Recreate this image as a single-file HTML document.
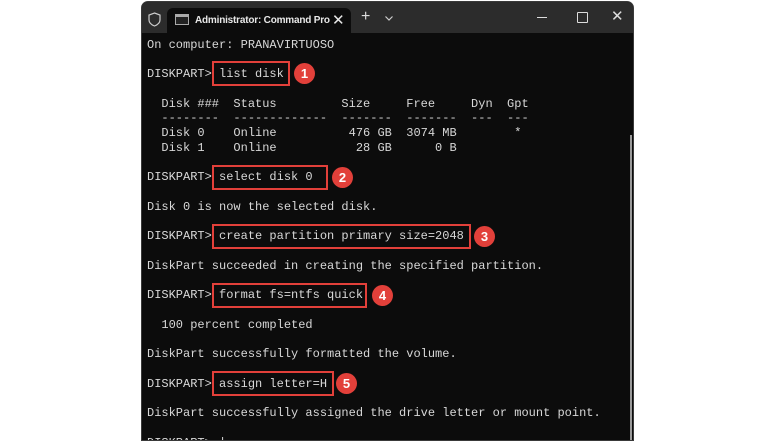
<!DOCTYPE html>
<html><head><style>
body{margin:0;width:780px;height:438px;background:#fff;overflow:hidden;position:relative;font-family:"Liberation Mono",monospace}
.win{position:absolute;left:141px;top:1px;width:493px;height:440px;background:#0c0c0c;border-radius:7px 7px 0 0;overflow:hidden;border:1px solid #3a3a3a;box-sizing:border-box}
.tb{position:absolute;left:0;top:0;width:100%;height:31px;background:#2c2c2c}
.tab{position:absolute;left:25px;top:6px;width:184px;height:25px;background:#0c0c0c;border-radius:6px 6px 0 0;color:#e8e8e8;font:bold 10px "Liberation Sans",sans-serif}
.t{position:absolute;left:5px;top:35.5px;color:#d8d8d8;font-size:12px;line-height:14.75px;white-space:pre}
.box{position:absolute;border:2px solid #e2403a;box-sizing:border-box;height:25px}
.c{position:absolute;width:21px;height:21px;border-radius:50%;background:#e2403a;color:#fff;font:bold 13px/21px "Liberation Sans",sans-serif;text-align:center}
.ic{position:absolute;color:#ddd;font:14px "Liberation Sans",sans-serif}
</style></head><body>
<div class="win">
<div class="tb">
<svg style="position:absolute;left:6px;top:10px" width="13" height="15" viewBox="0 0 13 15"><path d="M6.5 1 L12 3 V8 C12 11 9 13 6.5 14 C4 13 1 11 1 8 V3 Z" fill="none" stroke="#ccc" stroke-width="1.2"/></svg>
<div class="tab">
<svg style="position:absolute;left:8px;top:6px" width="14" height="11"><rect x="0.5" y="0.5" width="13" height="10" fill="#222" stroke="#aaa"/><rect x="1" y="1" width="12" height="2" fill="#aaa"/></svg>
<span style="position:absolute;left:28px;top:7px;letter-spacing:-0.2px">Administrator: Command Pro</span>
<span style="position:absolute;left:165px;top:3px;font-weight:normal;font-size:15px">✕</span>
</div>
<span class="ic" style="left:219px;top:6px;font-size:16px">+</span>
<svg style="position:absolute;left:243px;top:14px" width="8" height="5"><path d="M0.5 0.5 L4 4 L7.5 0.5" fill="none" stroke="#ccc" stroke-width="1.2"/></svg>
<div style="position:absolute;left:395px;top:15px;width:10px;height:1px;background:#ddd"></div>
<div style="position:absolute;left:435px;top:10px;width:9px;height:9px;border:1.3px solid #ddd;border-radius:1px"></div>
<span class="ic" style="left:469px;top:5px;font-size:15px">✕</span>
</div>
<div style="position:absolute;left:488px;top:133px;width:2px;height:310px;background:#9a9a9a"></div>
<div class="t">On computer: PRANAVIRTUOSO

DISKPART&gt; list disk

  Disk ###  Status         Size     Free     Dyn  Gpt
  --------  -------------  -------  -------  ---  ---
  Disk 0    Online          476 GB  3074 MB        *
  Disk 1    Online           28 GB      0 B

DISKPART&gt; select disk 0

Disk 0 is now the selected disk.

DISKPART&gt; create partition primary size=2048

DiskPart succeeded in creating the specified partition.

DISKPART&gt; format fs=ntfs quick

  100 percent completed

DiskPart successfully formatted the volume.

DISKPART&gt; assign letter=H

DiskPart successfully assigned the drive letter or mount point.

DISKPART&gt; |</div>
</div>
<div class="box" style="left:212px;top:61px;width:78px"></div><div class="c" style="left:294px;top:63px">1</div>
<div class="box" style="left:212px;top:165px;width:116px"></div><div class="c" style="left:332px;top:167px">2</div>
<div class="box" style="left:212px;top:224px;width:259px"></div><div class="c" style="left:474px;top:226px">3</div>
<div class="box" style="left:212px;top:283px;width:155px"></div><div class="c" style="left:372px;top:285px">4</div>
<div class="box" style="left:212px;top:371px;width:122px"></div><div class="c" style="left:336px;top:373px">5</div>
</body></html>
